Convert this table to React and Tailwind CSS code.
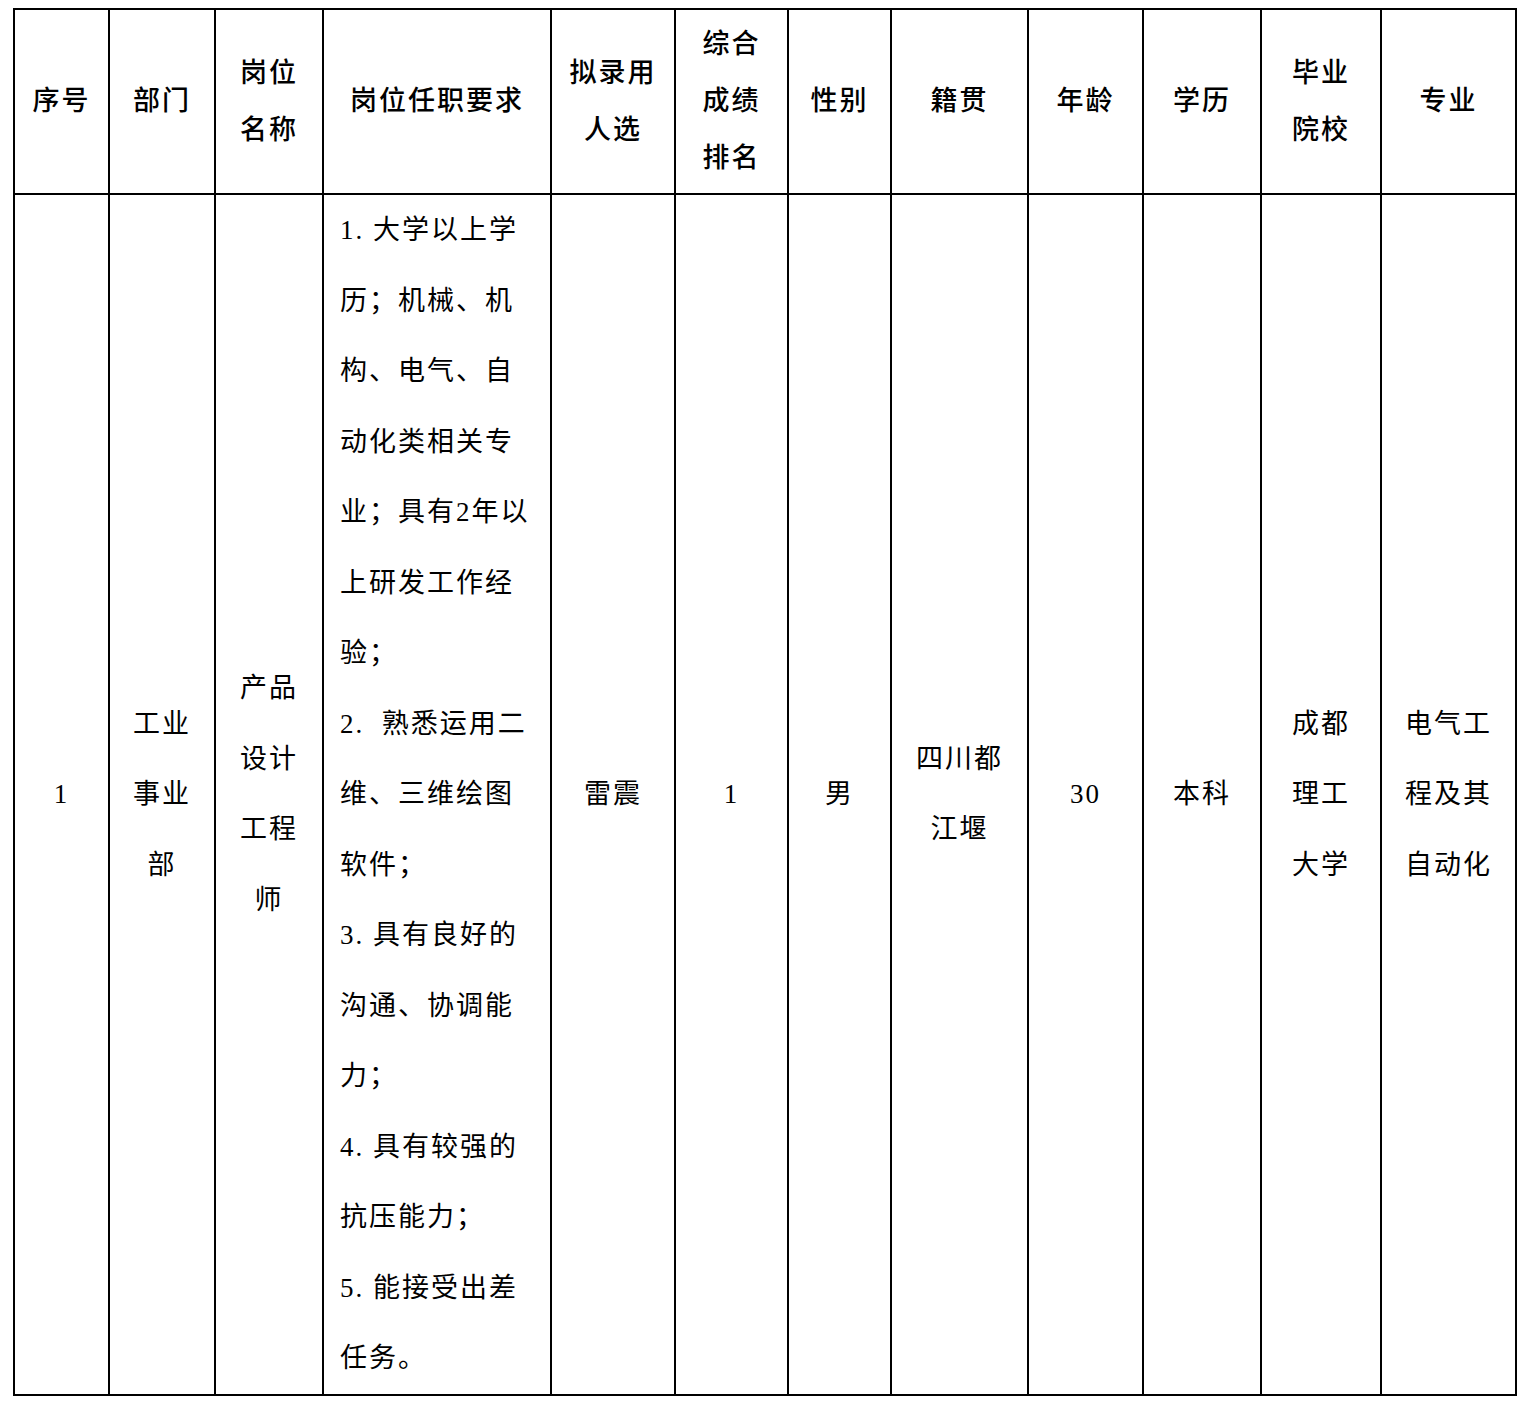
const headers = [
  ["序号"],
  ["部门"],
  ["岗位", "名称"],
  ["岗位任职要求"],
  ["拟录用", "人选"],
  ["综合", "成绩", "排名"],
  ["性别"],
  ["籍贯"],
  ["年龄"],
  ["学历"],
  ["毕业", "院校"],
  ["专业"],
];

const widths = [95, 106, 108, 228, 124, 113, 103, 137, 115, 118, 120, 135];

const requirements = [
  "1. 大学以上学",
  "历；机械、机",
  "构、电气、自",
  "动化类相关专",
  "业；具有2年以",
  "上研发工作经",
  "验；",
  "2.  熟悉运用二",
  "维、三维绘图",
  "软件；",
  "3. 具有良好的",
  "沟通、协调能",
  "力；",
  "4. 具有较强的",
  "抗压能力；",
  "5. 能接受出差",
  "任务。",
];

const row = [
  ["1"],
  ["工业", "事业", "部"],
  ["产品", "设计", "工程", "师"],
  null,
  ["雷震"],
  ["1"],
  ["男"],
  ["四川都", "江堰"],
  ["30"],
  ["本科"],
  ["成都", "理工", "大学"],
  ["电气工", "程及其", "自动化"],
];

function Lines({ lines }) {
  return lines.map((l, i) => (
    <div key={i} className="whitespace-pre">
      {l}
    </div>
  ));
}

export default function App() {
  return (
    <div className="bg-white pl-[13px] pt-[8px] pb-[10px] font-['Liberation_Serif','Noto_Sans_CJK_SC',serif] text-[27px] tracking-[2px] text-black">
      <table className="table-fixed border-collapse" style={{ width: 1504 }}>
        <colgroup>
          {widths.map((w, i) => (
            <col key={i} style={{ width: w }} />
          ))}
        </colgroup>
        <thead>
          <tr className="h-[185px]">
            {headers.map((h, i) => (
              <th
                key={i}
                className="border-2 border-black p-0 text-center align-middle font-medium leading-[57px]"
              >
                <Lines lines={h} />
              </th>
            ))}
          </tr>
        </thead>
        <tbody>
          <tr>
            {row.map((c, i) =>
              c ? (
                <td
                  key={i}
                  className="border-2 border-black p-0 text-center align-middle leading-[70.5px]"
                >
                  <Lines lines={c} />
                </td>
              ) : (
                <td
                  key={i}
                  className="border-2 border-black py-0 pl-[16px] pr-0 text-left align-top leading-[70.5px]"
                >
                  <Lines lines={requirements} />
                </td>
              )
            )}
          </tr>
        </tbody>
      </table>
    </div>
  );
}
